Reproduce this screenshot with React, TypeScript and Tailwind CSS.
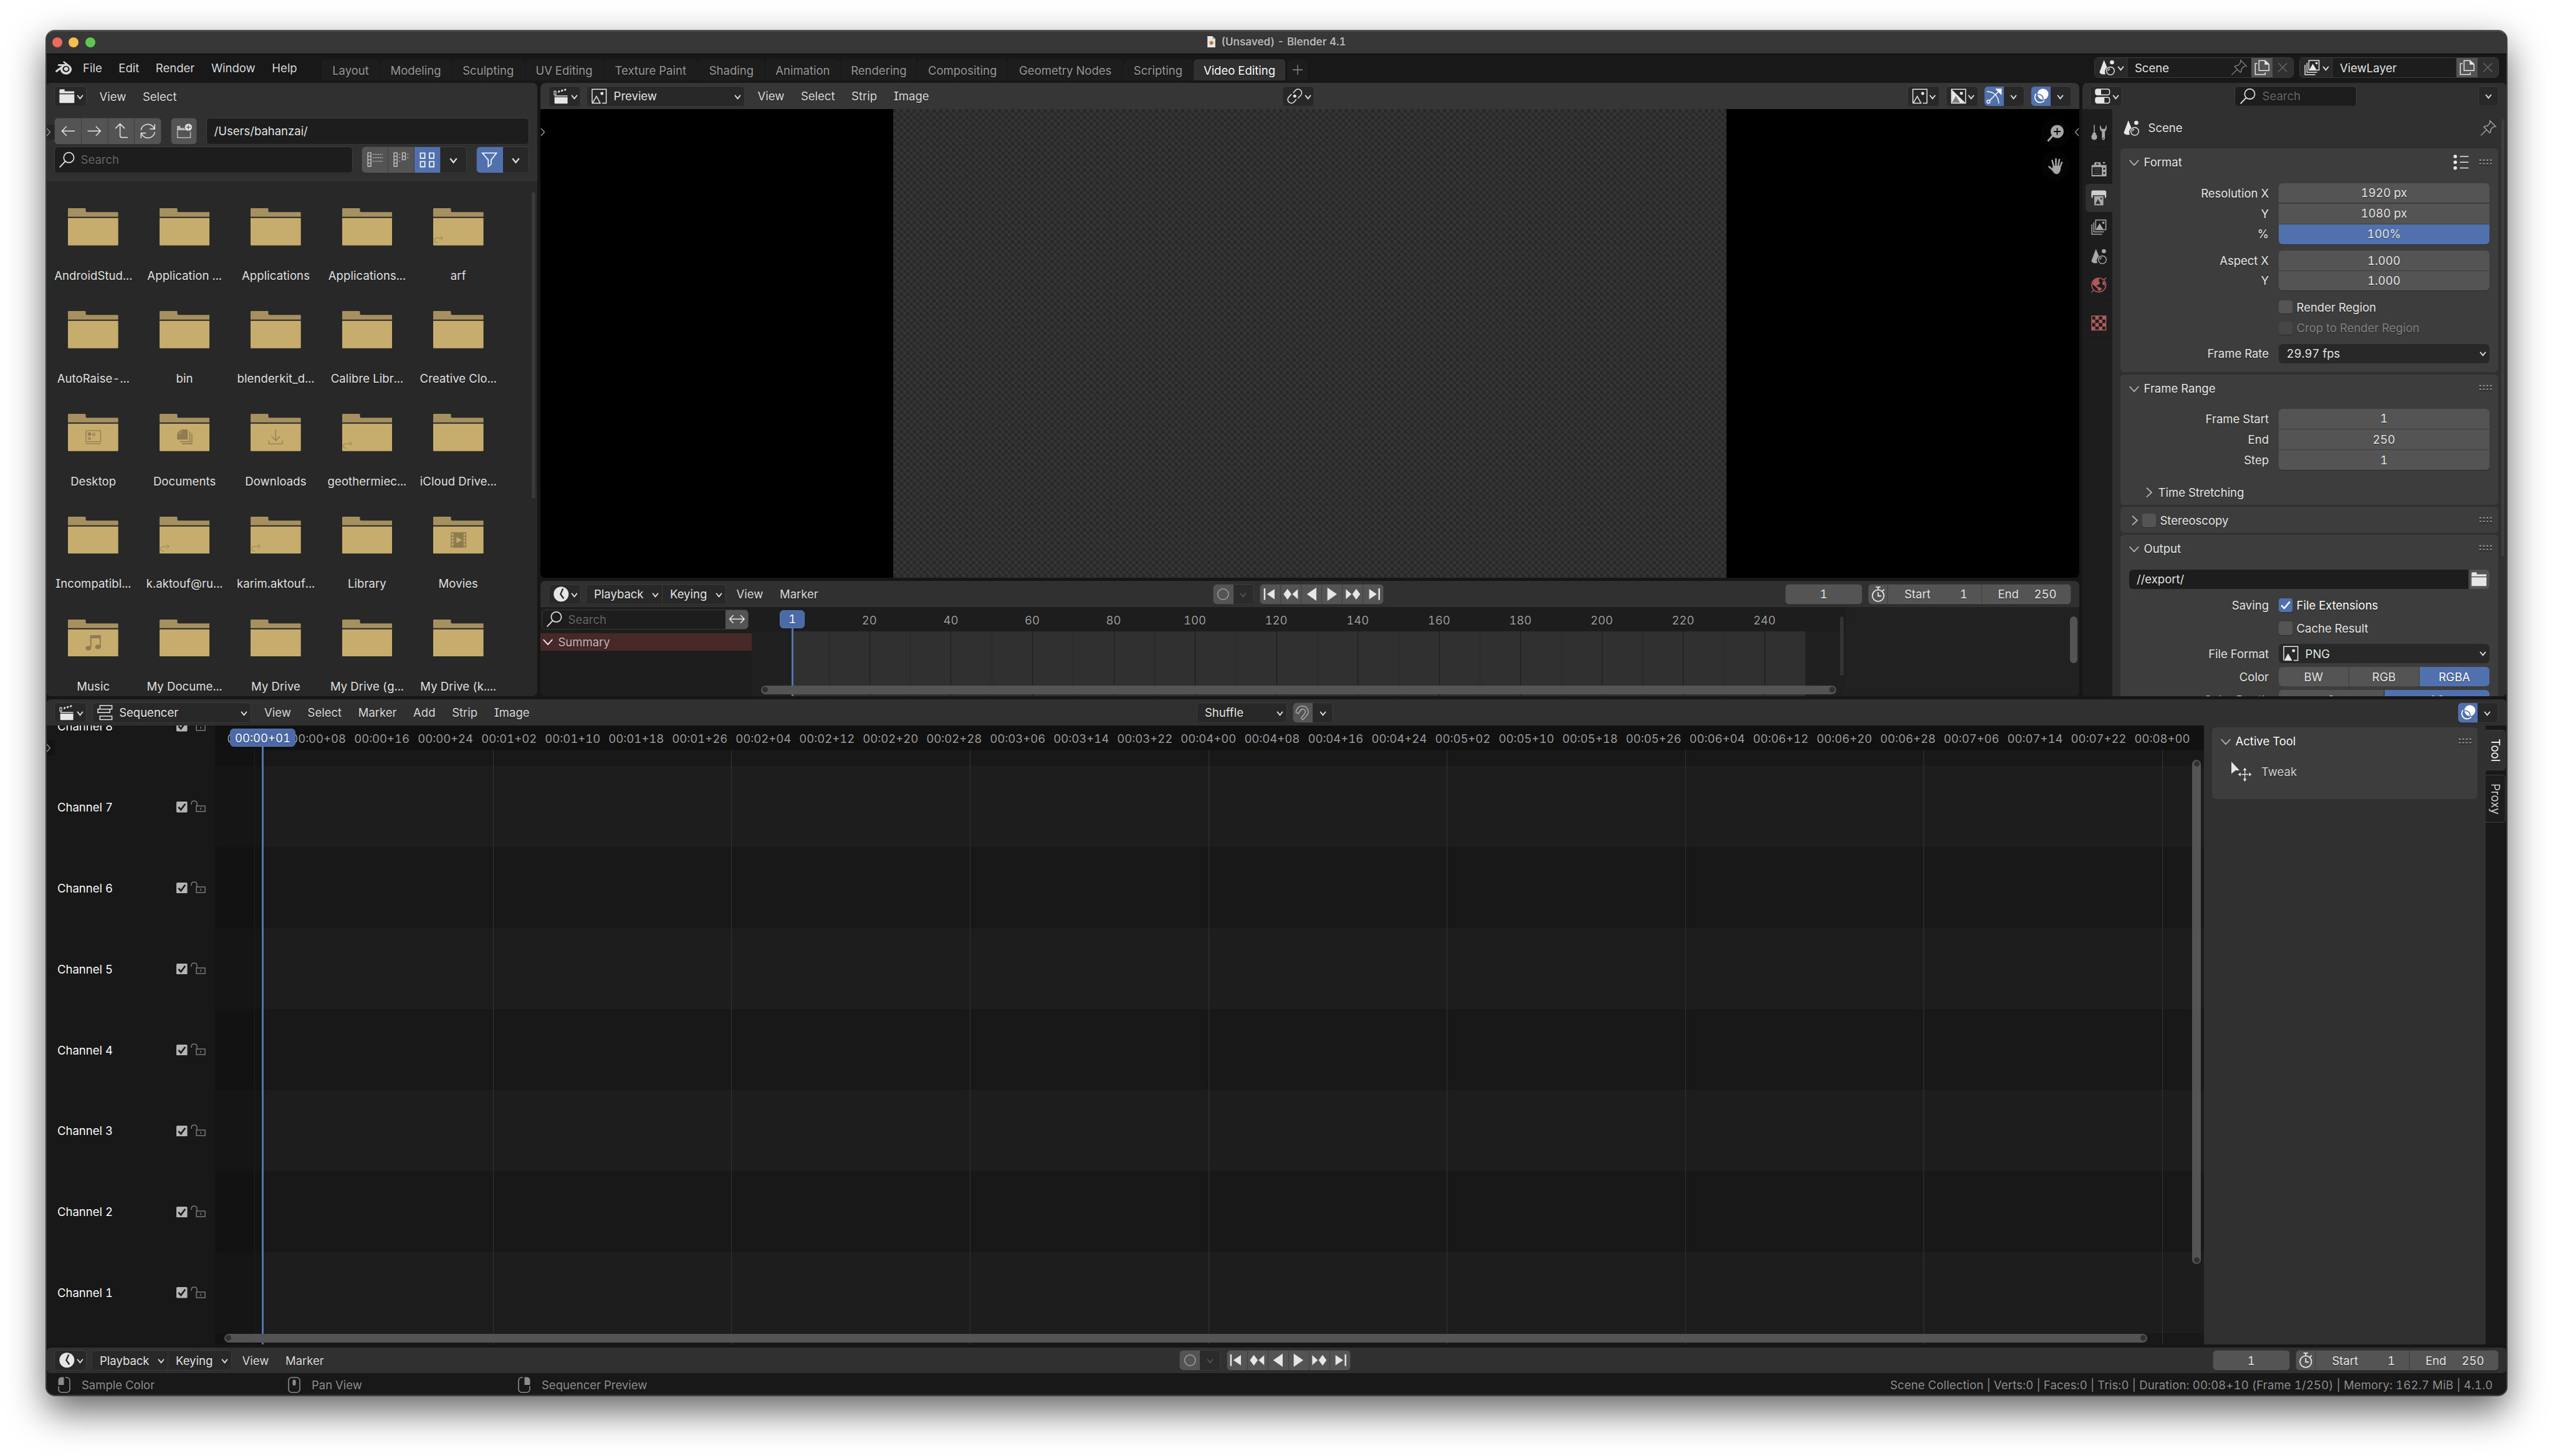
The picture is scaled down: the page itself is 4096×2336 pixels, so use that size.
import clsx from "clsx";
import { ReactNode } from "react";
import { SiBlender } from "react-icons/si";

type IconProps = { className?: string };

/* ---------- icons, drawn on a 16 unit grid ---------- */

const Icon = ({ className, children }: IconProps & { children: ReactNode }) => (
  <svg
    viewBox="0 0 16 16"
    className={clsx("size-[26.6px] shrink-0 overflow-visible", className)}
    fill="none"
    stroke="currentColor"
    strokeWidth="0.9"
  >
    {children}
  </svg>
);

const Chevron = ({ className }: IconProps) => (
  <svg viewBox="0 0 12 12" className={clsx("size-[11px] shrink-0", className)} fill="none" stroke="currentColor" strokeWidth="2">
    <path d="M1.2 3 L6 9 L10.8 3" />
  </svg>
);

const Triangle = ({ className }: IconProps) => (
  <svg viewBox="0 0 16 10" className={clsx("w-[16px] h-[10px] shrink-0", className)} fill="none" stroke="currentColor" strokeWidth="1.8">
    <path d="M0.7 1 L8 9 L15.3 1" />
  </svg>
);

const FolderIcon = ({ className }: IconProps) => (
  <Icon className={className}>
    <path fill="currentColor" stroke="none" d="M0.8 2.4 q0 -1 1 -1 h4 v1.9 h9.3 v2 h-14.3z" />
    <path fill="currentColor" stroke="none" d="M0.8 6.1 h14.4 v8 q0 .5 -.5 .5 h-13.4 q-.5 0 -.5 -.5z" />
  </Icon>
);

const ArrowLeft = () => (
  <Icon><path d="M6.5 3.5 L2 8 L6.5 12.5 M2 8 H14.5" /></Icon>
);
const ArrowRight = () => (
  <Icon><path d="M9.5 3.5 L14 8 L9.5 12.5 M14 8 H1.5" /></Icon>
);
const ArrowParent = () => (
  <Icon><path d="M2.5 5.5 L7 1 L11.5 5.5 M7 1 V12.5 Q7 14.2 8.7 14.2 H14.5" /></Icon>
);
const Refresh = () => (
  <Icon>
    <path d="M1.3 7 A6.7 6.7 0 0 1 14.2 5.8 M14.6 1.3 V6 H9.8" />
    <path d="M14.7 9 A6.7 6.7 0 0 1 1.8 10.2 M1.4 14.7 V10 H6.2" />
  </Icon>
);
const NewFolder = () => (
  <Icon>
    <g opacity="0.7">
      <path fill="currentColor" stroke="none" d="M1.2 3 h3.2 v2 h3.6 q.8 1.8 3 2.2 h-9.8z" />
      <path d="M1.6 7.3 V14.3 H14.2 V8.6" />
    </g>
    <circle cx="12.2" cy="4.3" r="3.4" fill="currentColor" stroke="none" />
    <path d="M12.2 2.2 V6.4 M10.1 4.3 H14.3" stroke="#545454" strokeWidth="0.8" />
  </Icon>
);
const Search = ({ className }: IconProps) => (
  <Icon className={className}>
    <circle cx="9.9" cy="5.9" r="4.9" strokeWidth="1" />
    <path d="M6.4 9.5 L1 15.2" strokeWidth="1.1" />
  </Icon>
);
const ListVertical = () => (
  <Icon className="opacity-80">
    <path d="M1.3 1.3 h3 v13 h-3z M1.3 4.6 h3 M1.3 8 h3 M1.3 11.2 h3" strokeWidth="0.8" />
    <path d="M6 2.8 h9.5 M6 6 h9.5 M6 9.4 h9.5" strokeDasharray="1 .8" strokeWidth="0.8" />
  </Icon>
);
const ListHorizontal = () => (
  <Icon className="opacity-80">
    <path d="M1.3 1.3 h3 v13 h-3z M1.3 4.6 h3 M1.3 8 h3 M1.3 11.2 h3 M9.3 1.3 h3 v6.7 h-3z M9.3 4.6 h3" strokeWidth="0.8" />
    <path d="M6 2.8 h1.6 M6 6 h1.6 M6 9.4 h1.6 M14 2.8 h1.6 M14 6 h1.6" strokeDasharray=".9 .5" strokeWidth="0.8" />
  </Icon>
);
const GridIcon = () => (
  <Icon>
    <path d="M1.5 1.5 h4.3 v5 h-4.3z M10.2 1.5 h4.3 v5 h-4.3z M1.5 9.8 h4.3 v5 h-4.3z M10.2 9.8 h4.3 v5 h-4.3z" strokeWidth="1" />
  </Icon>
);
const Filter = () => (
  <Icon><path d="M1.2 1.5 H14.8 L9.6 8.2 V12.2 L6.8 14.6 V8.2 Z" strokeWidth="1" /></Icon>
);
const Clapper = () => (
  <Icon>
    <path fill="currentColor" stroke="none" d="M1.6 7.3 h12.6 v1 h-12.6z M1.6 9 h12.6 v5.8 q0 .4 -.4 .4 h-11.8 q-.4 0 -.4 -.4z" />
    <path d="M1.2 3.2 h1.8 v3.3 h-1.8z" strokeWidth="0.7" />
    <path d="M5.2 4.4 l1.3 -1.6 M8.2 3.5 l1.3 -1.6 M11.2 2.6 l1.3 -1.6" strokeWidth="1.5" />
  </Icon>
);
const ImageIcon = ({ className }: IconProps) => (
  <Icon className={className}>
    <path d="M1.2 14.6 V1.3 H14.8 V14.7 H10.8" />
    <path fill="currentColor" stroke="none" d="M1.6 15.1 L5.4 8 L9.4 15.1z" />
    <circle cx="10.7" cy="5.4" r="1.5" fill="currentColor" stroke="none" />
  </Icon>
);
const ImageOutline = () => (
  <Icon>
    <path d="M1.2 14.6 V1.3 H14.8 V14.7 H10.8 M1.6 14.7 L5.4 8.2 L9 14.7 z" />
    <circle cx="10.7" cy="5.4" r="1.5" fill="currentColor" stroke="none" />
  </Icon>
);
const ImageAlpha = () => (
  <Icon>
    <path d="M1.2 1.3 H14.8 V14.7 H1.2z" />
    <path fill="currentColor" stroke="none" d="M1.2 1.3 L14.8 14.7 H9.5 L5.4 8 L1.6 14.7z" />
    <path fill="currentColor" stroke="none" opacity="0.45" d="M1.6 15.1 L5.4 8 L9.4 15.1z" />
    <circle cx="10.7" cy="5.2" r="1.5" fill="currentColor" stroke="none" />
  </Icon>
);
const LinkIcon = () => (
  <Icon>
    <path d="M6.5 5 L8.6 2.4 A3.5 3.5 0 0 1 13.8 7.2 L11 10" />
    <path d="M9.5 11 L7.4 13.6 A3.5 3.5 0 0 1 2.2 8.8 L5 6" />
    <circle cx="8" cy="8" r="1.5" fill="currentColor" stroke="none" />
  </Icon>
);
const GizmoIcon = () => (
  <Icon>
    <path d="M1 3.6 C8 3.6 12 8 12.6 15" />
    <circle cx="2.6" cy="13.3" r="1.5" />
    <path d="M3.8 12.2 L13.5 2.3" />
    <path fill="currentColor" stroke="none" d="M9 0.8 H15.2 V7z" />
  </Icon>
);
const OverlayIcon = () => (
  <Icon>
    <circle cx="10" cy="6" r="5.3" fill="currentColor" stroke="none" />
    <path d="M3.4 5.6 A5 5 0 1 0 11.4 12.2" strokeWidth="1.1" />
    <path d="M4.9 6.2 A4.8 4.8 0 0 1 10.4 10.9" stroke="#5070ae" strokeWidth="1" />
  </Icon>
);
const SceneIcon = ({ className }: IconProps) => (
  <Icon className={className}>
    <path fill="currentColor" stroke="none" d="M5.2 0.8 L8.2 8 A5 5 0 0 0 6.6 14.4 Q2.4 15.4 0.8 12.6 Z" />
    <circle cx="12.9" cy="3" r="2" fill="currentColor" stroke="none" />
    <circle cx="11.4" cy="11.3" r="3.8" />
    <path d="M9.2 11.2 A2.3 2.3 0 0 1 11 9.2" strokeWidth="0.8" />
  </Icon>
);
const Pin = ({ className }: IconProps) => (
  <Icon className={className}>
    <path d="M9.6 1 L15 6.6 C13.4 6.6 12.8 6.8 12 7.6 L10.4 9.3 C10.6 11 10.2 12 9.3 12.8 L3.6 7 C4.6 6.2 5.5 5.9 7 6 L8.8 4.2 C9.6 3.3 9.8 2.4 9.6 1z M6.2 9.9 L0.8 15.2" />
  </Icon>
);
const CopyIcon = () => (
  <Icon>
    <path d="M5 1.3 H10.8 L14.6 4.8 V11 H5z" />
    <path fill="currentColor" stroke="none" d="M10.4 1 L15 5.3 H10.4z" />
    <path d="M3.4 4.2 H1.4 V14.8 H11 V12.8" />
  </Icon>
);
const Cross = () => (
  <Icon><path d="M3.8 3.8 L12.2 12.2 M12.2 3.8 L3.8 12.2" /></Icon>
);
const LayersIcon = ({ className }: IconProps) => (
  <Icon className={className}>
    <path d="M5 1.2 H14.8 V10.6 H5z" />
    <path fill="currentColor" stroke="none" d="M5.4 10.4 L8.8 4.4 L12.4 10.4z" />
    <circle cx="12.4" cy="3.8" r="1.1" fill="currentColor" stroke="none" />
    <path d="M3.2 3.4 V12.7 H13 M1.3 5.4 V14.9 H11.2" />
  </Icon>
);
const PropertiesIcon = () => (
  <Icon>
    <path d="M3 1.2 h10 a1.8 1.8 0 0 1 1.8 1.8 v2 a1.8 1.8 0 0 1 -1.8 1.8 h-10 a1.8 1.8 0 0 1 -1.8 -1.8 v-2 a1.8 1.8 0 0 1 1.8 -1.8z M3 9.2 h10 a1.8 1.8 0 0 1 1.8 1.8 v2 a1.8 1.8 0 0 1 -1.8 1.8 h-10 a1.8 1.8 0 0 1 -1.8 -1.8 v-2 a1.8 1.8 0 0 1 1.8 -1.8z" />
    <path
      fill="currentColor"
      stroke="none"
      d="M3 1.2 h3.6 v5.6 h-3.6 a1.8 1.8 0 0 1 -1.8 -1.8 v-2 a1.8 1.8 0 0 1 1.8 -1.8z M3 9.2 h6.8 v5.6 h-6.8 a1.8 1.8 0 0 1 -1.8 -1.8 v-2 a1.8 1.8 0 0 1 1.8 -1.8z"
    />
  </Icon>
);
const ToolsIcon = () => (
  <Icon>
    <path d="M3.6 0.8 V9" />
    <path fill="currentColor" stroke="none" d="M2 8.4 h3.2 v1.6 q1.2 1 1.2 2.4 q0 2.9 -2.8 2.9 q-2.8 0 -2.8 -2.9 q0 -1.4 1.2 -2.4z" />
    <path fill="currentColor" stroke="none" d="M9 1 V4 q0 2 2 3.2 V13.6 q0 1.7 1.4 1.7 q1.5 0 1.5 -1.7 V7.2 q1.6 -1.2 1.6 -3.2 V1 q-1 .8 -1.4 3.6 h-3.4 q-.6 -2.8 -1.7 -3.6z" />
    <circle cx="12.4" cy="13.7" r="0.6" fill="#1d1d1d" stroke="none" />
  </Icon>
);
const RenderIcon = () => (
  <Icon>
    <path fill="currentColor" stroke="none" d="M1 4 h2.4 l.6 -2.6 h5.4 l.6 2.6 h5.4 v11 h-14.4z M12 1.2 h2 v1.4 h-2z" />
    <path stroke="#1d1d1d" d="M2.4 6.6 h8 v6.6 h-8z" fill="#1d1d1d" />
    <path d="M3.2 8 h6.4 M3.2 10 h6.4 M3.2 12 h6.4" opacity="0.35" />
    <circle cx="13.2" cy="7.6" r="1" fill="#1d1d1d" stroke="none" />
    <circle cx="13.2" cy="11.8" r="1" fill="#1d1d1d" stroke="none" />
    <path fill="#1d1d1d" stroke="none" d="M5.4 2.6 h2.6 v1.2 h-2.6z" />
  </Icon>
);
const OutputIcon = () => (
  <Icon>
    <path fill="currentColor" stroke="none" d="M2.6 0.9 h10.8 q1.8 0 1.8 2 v4 q0 1.4 -1.4 1.4 v-2.8 h-11.6 v2.8 q-1.4 0 -1.4 -1.4 v-4 q0 -2 1.8 -2z" />
    <path fill="currentColor" stroke="none" opacity="0.75" d="M3.6 6.4 h8.8 v8.9 h-8.8z" />
    <path fill="#303030" stroke="none" d="M4.8 14 L7.2 9.4 L9.8 14z" />
    <circle cx="10.4" cy="8.9" r="0.9" fill="#303030" stroke="none" />
  </Icon>
);
const WorldIcon = () => (
  <Icon>
    <circle cx="8" cy="8" r="6.8" />
    <path fill="currentColor" stroke="none" d="M2.2 5.4 C4 1.6 7 1.4 8.4 2 L8 4.6 L9.4 6 L7.6 7.8 L5.6 8.6 L7.8 10 L11 11 L9.6 13.4 L7.4 13.6 L6.8 11.4 L4.4 9.2 L2 7.4z M11.6 4.2 l2 1 l.4 3.6 l-2.4 -1.4z" />
    <path d="M12.6 3.2 L15.2 1 M3.4 12.8 L0.8 15.2" />
  </Icon>
);
const TextureIcon = () => (
  <Icon>
    <path d="M1.2 1.2 H14.8 V14.8 H1.2z" />
    <path fill="currentColor" stroke="none" d="M4.6 1.2 h3.4 v3.4 h-3.4z M11.4 1.2 h3.4 v3.4 h-3.4z M1.2 4.6 h3.4 v3.4 h-3.4z M8 4.6 h3.4 v3.4 h-3.4z M4.6 8 h3.4 v3.4 h-3.4z M11.4 8 h3.4 v3.4 h-3.4z M1.2 11.4 h3.4 v3.4 h-3.4z M8 11.4 h3.4 v3.4 h-3.4z" />
  </Icon>
);
const PresetIcon = () => (
  <Icon>
    <circle cx="2.5" cy="2.4" r="1.7" fill="currentColor" stroke="none" />
    <circle cx="2.5" cy="8" r="1.7" fill="currentColor" stroke="none" />
    <circle cx="2.5" cy="13.6" r="1.7" fill="currentColor" stroke="none" />
    <path d="M7 2.4 h8.3 M7 8 h8.3 M7 13.6 h8.3" />
  </Icon>
);
const ClockIcon = () => (
  <Icon>
    <circle cx="8" cy="8" r="7.2" fill="currentColor" stroke="none" />
    <path d="M9.8 2.6 L7.4 8 L10.4 12.2" stroke="#282828" strokeWidth="1.4" />
  </Icon>
);
const Stopwatch = () => (
  <Icon>
    <circle cx="8" cy="9.4" r="5.6" strokeWidth="1.1" />
    <path d="M8 3.8 V1.4 M5.8 1.1 H10.2 M12 5.2 L13.8 3.4 M8 6 V9.8 H11" strokeWidth="1.1" />
  </Icon>
);
const RecordIcon = () => (
  <Icon className="opacity-50"><circle cx="8" cy="8" r="5.2" /></Icon>
);
const Magnet = () => (
  <Icon className="opacity-60">
    <path d="M1.2 7.6 C2.4 2.8 6 0.8 9.4 2 C13.4 3.4 14.4 8 11.4 11.2 L8 15 L6.4 13.2 L9.6 9.2 C11.2 7 10.4 4.8 8.4 4.6 C6.2 4.4 5.2 6 3.8 9z" />
  </Icon>
);
const SequencerIcon = () => (
  <Icon>
    <path d="M3.2 1.2 H14.8 V4.6 H3.2z M1.2 4.6 H12.8 V8 H1.2z M3.2 11.4 H14.8 V14.8 H3.2z" />
  </Icon>
);
const SwapArrows = () => (
  <Icon><path d="M4.6 4.2 L0.9 8 L4.6 11.8 M11.4 4.2 L15.1 8 L11.4 11.8 M1 8 H15" /></Icon>
);
const ZoomIcon = () => (
  <svg viewBox="0 0 30 28" className="w-[30px] h-[28px]">
    <circle cx="17.5" cy="11" r="10.5" fill="#a6a6a6" />
    <path d="M10.5 17.5 L2.5 26.5" stroke="#a6a6a6" strokeWidth="3" />
    <path d="M17.5 5.5 V16.5 M12 11 H23" stroke="#000" strokeWidth="1.8" />
  </svg>
);
const HandIcon = () => (
  <svg viewBox="0 0 30 28" className="w-[30px] h-[28px]" fill="none" stroke="#a6a6a6" strokeWidth="2.6" strokeLinecap="round">
    <path d="M12 14 L9.5 4.5 M15.5 13 L15.5 2 M19 13 L21 3 M22 15 L25 7.5 M11 20 L4.5 14.5" />
    <path d="M11 13 L23.2 13 Q24 25 17 26.4 Q12.5 26.4 9 19.4z" fill="#a6a6a6" stroke="none" />
  </svg>
);
const TweakIcon = () => (
  <svg viewBox="0 0 34 32" className="w-[34px] h-[32px]" fill="#e5e5e5">
    <path d="M1 0 L14 14 H7.6 L1 19.6z" />
    <path d="M22.6 13 V31 M17 20.5 H28" stroke="#e5e5e5" strokeWidth="1.3" />
    <path d="M22.6 9.5 l2.9 4.6 h-5.8z M22.6 32 l2.9 -4.6 h-5.8z M11.6 20.5 l4.4 -3 v6z M33.6 20.5 l-4.4 -3 v6z" />
  </svg>
);

const transport = [
  <path key="s" d="M1.6 2.4 h1.5 v11.2 h-1.5z M12 3 V13 L4.6 8z" />,
  <path key="pk" d="M4.6 2.8 L8.4 8 L4.6 13.2 L0.8 8z M14.6 3.2 V12.8 L9.2 8z" />,
  <path key="r" d="M12.6 1.6 V14.4 L3.4 8z" />,
  <path key="p" d="M3.4 1.6 V14.4 L12.6 8z" />,
  <path key="nk" d="M11.4 2.8 L15.2 8 L11.4 13.2 L7.6 8z M1.4 3.2 V12.8 L6.8 8z" />,
  <path key="e" d="M14.4 2.4 h-1.5 v11.2 h1.5z M4 3 V13 L11.4 8z" />,
];

/* ---------- shared widgets ---------- */

const widget = "flex items-center shrink-0 h-[33px] rounded-[6px] border border-[#3d3d3d] overflow-hidden shadow-[0_1px_0_rgba(0,0,0,0.2)]";

const EditorButton = ({ children, className }: IconProps & { children: ReactNode }) => (
  <div className={clsx(widget, "w-[52px] bg-[#282828] pl-[6px] gap-[2px]", className)}>
    {children}
    <Chevron className="mt-[2px]" />
  </div>
);

const Menu = ({ items }: { items: string[] }) => (
  <div className="flex gap-[26.600px] text-[#dadada]">
    {items.map((item) => (
      <span key={item}>{item}</span>
    ))}
  </div>
);

const ToggleDrop = ({ icon, on }: { icon: ReactNode; on?: boolean }) => (
  <div className={clsx(widget, "w-[65px] bg-[#282828]")}>
    <div className={clsx("flex items-center justify-center w-[31px] h-full", on ? "bg-[#5070ae] text-white" : "bg-[#545454]")}>
      {icon}
    </div>
    <div className="flex flex-1 items-center justify-center">
      <Chevron className="mt-[2px]" />
    </div>
  </div>
);

const PlaybackMenus = () => (
  <>
    <EditorButton><ClockIcon /></EditorButton>
    <div className={clsx(widget, "ml-[8px] w-[225px] bg-[#282828]")}>
      <div className="flex items-center w-[122px] h-full pl-[12px] pr-[5px] border-r border-[#3d3d3d]">
        Playback
        <Chevron className="ml-auto mt-[2px]" />
      </div>
      <div className="flex flex-1 items-center pl-[12px] pr-[5px]">
        Keying
        <Chevron className="ml-auto mt-[2px]" />
      </div>
    </div>
    <div className="ml-[16.500px]"><Menu items={["View", "Marker"]} /></div>
  </>
);

const Transport = () => (
  <>
    <div className={clsx(widget, "w-[66px] bg-[#2b2b2b]")}>
      <div className="flex items-center justify-center w-[32px] h-full bg-[#545454]"><RecordIcon /></div>
      <div className="flex flex-1 items-center justify-center text-[#555]"><Chevron className="mt-[2px]" /></div>
    </div>
    <div className={clsx(widget, "ml-[9.500px] w-[199px] bg-[#545454] divide-x divide-[#3d3d3d]")}>
      {transport.map((shape, index) => (
        <div key={index} className="flex flex-1 h-full items-center justify-center">
          <svg viewBox="0 0 16 16" className="size-[26.600px]" fill="#e6e6e6">{shape}</svg>
        </div>
      ))}
    </div>
  </>
);

const FrameFields = () => (
  <div className="flex ml-auto gap-[9.500px] pr-[13.500px]">
    <div className={clsx(widget, "w-[123.500px] bg-[#545454] justify-center")}>1</div>
    <div className={clsx(widget, "w-[325.500px] bg-[#545454] divide-x divide-[#3d3d3d]")}>
      <div className="flex items-center justify-center w-[31px] h-full"><Stopwatch /></div>
      <div className="flex items-center justify-between w-[151px] h-full pl-[26.500px] pr-[22.500px]">
        <span>Start</span><span>1</span>
      </div>
      <div className="flex flex-1 items-center justify-between h-full pl-[25.500px] pr-[22px]">
        <span>End</span><span>250</span>
      </div>
    </div>
  </div>
);

const RegionToggle = ({ className, flip }: IconProps & { flip?: boolean }) => (
  <div className={clsx("absolute flex items-center w-[14px] h-[24px] bg-black/20", flip ? "justify-end" : "justify-start", className)}>
    <svg viewBox="0 0 8 14" className="w-[8px] h-[14px]" fill="none" stroke="#8c8c8c" strokeWidth="1.600">
      {flip ? <path d="M7 1 L1.6 7 L7 13" /> : <path d="M1 1 L6.4 7 L1 13" />}
    </svg>
  </div>
);

const ScrollKnob = () => <div className="size-[11px] rounded-full bg-[#303030] border border-[#5a5a5a]" />;

/* ---------- title bar and top bar ---------- */

const TitleBar = () => (
  <div className="relative flex items-center justify-center h-[38px] bg-[#373737] border-b border-black pb-[1px]">
    <div className="absolute left-[10px] top-[10.500px] flex gap-[10.400px]">
      <div className="size-[16px] rounded-full bg-[#ec6a5e]" />
      <div className="size-[16px] rounded-full bg-[#f4bf4f]" />
      <div className="size-[16px] rounded-full bg-[#61c554]" />
    </div>
    <svg viewBox="0 0 16 20" className="w-[15px] h-[18px] mr-[8px]">
      <path d="M1 0 H10 L15 5 V20 H1z" fill="#e8e8e8" />
      <path d="M10 0 V5 H15z" fill="#aaa" />
      <circle cx="8" cy="12" r="3.6" fill="#e08a2e" />
      <circle cx="8.6" cy="12" r="1.3" fill="#2b5fa5" />
    </svg>
    <span className="text-[17px] font-semibold text-[#b8b8b8]">(Unsaved) - Blender 4.1</span>
  </div>
);

const workspaces = [
  { name: "Layout", width: "w-[94px]" },
  { name: "Modeling", width: "w-[115px]" },
  { name: "Sculpting", width: "w-[117.500px]" },
  { name: "UV Editing", width: "w-[126px]" },
  { name: "Texture Paint", width: "w-[151.500px]" },
  { name: "Shading", width: "w-[107.700px]" },
  { name: "Animation", width: "w-[121.400px]" },
  { name: "Rendering", width: "w-[122.700px]" },
  { name: "Compositing", width: "w-[145.700px]" },
  { name: "Geometry Nodes", width: "w-[184.500px]" },
  { name: "Scripting", width: "w-[113px]" },
  { name: "Video Editing", width: "w-[148px]" },
];

const DataBlock = ({ icon, name, pinned }: { icon: ReactNode; name: string; pinned?: boolean }) => (
  <div className={clsx(widget, "w-[320px] bg-[#1d1d1d]")}>
    <div className="flex items-center gap-[3px] w-[52px] h-full pl-[6px] bg-[#282828] border-r border-[#3d3d3d]">
      {icon}
      <Chevron className="mt-[2px]" />
    </div>
    <div className="flex flex-1 items-center justify-between pl-[12px] pr-[6px]">
      {name}
      {pinned && <Pin className="text-[#777]" />}
    </div>
    <div className="flex items-center justify-center w-[34px] h-full bg-[#545454]"><CopyIcon /></div>
    <div className="flex items-center justify-center w-[33px] h-full bg-[#303030] text-[#666]"><Cross /></div>
  </div>
);

const TopBar = () => (
  <div className="flex h-[46px] bg-[#181818]">
    <SiBlender className="size-[26px] ml-[14.500px] mt-[9px] mr-[18.500px] text-[#d9d9d9]" />
    <div className="mt-[10px]"><Menu items={["File", "Edit", "Render", "Window", "Help"]} /></div>
    <div className="absolute left-[442px] flex mt-[7.500px] h-[34.500px] text-[#989898]">
      {workspaces.map(({ name, width }) => (
        <div
          key={name}
          className={clsx(
            "flex items-center justify-center rounded-t-[6px] pt-[2px] border-r border-[#181818]",
            width,
            name === "Video Editing" ? "bg-[#303030] text-white" : "bg-[#1d1d1d]",
          )}
        >
          {name}
        </div>
      ))}
      <div className="flex items-center justify-center w-[32px] ml-[3px] rounded-t-[6px] bg-[#1d1d1d]">
        <svg viewBox="0 0 16 16" className="size-[16px]" stroke="#8c8c8c" strokeWidth="1.300"><path d="M8 0 V16 M0 8 H16" /></svg>
      </div>
    </div>
    <div className="flex gap-[9px] ml-auto mt-[5px] pr-[13px]">
      <DataBlock icon={<SceneIcon />} name="Scene" pinned />
      <DataBlock icon={<LayersIcon />} name="ViewLayer" />
    </div>
  </div>
);

/* ---------- file browser ---------- */

type FolderKind = "link" | "desktop" | "documents" | "downloads" | "movies" | "music";

const folders: { name: string; kind?: FolderKind }[] = [
  { name: "AndroidStud..." },
  { name: "Application ..." },
  { name: "Applications" },
  { name: "Applications..." },
  { name: "arf", kind: "link" },
  { name: "AutoRaise-..." },
  { name: "bin" },
  { name: "blenderkit_d..." },
  { name: "Calibre Libr..." },
  { name: "Creative Clo..." },
  { name: "Desktop", kind: "desktop" },
  { name: "Documents", kind: "documents" },
  { name: "Downloads", kind: "downloads" },
  { name: "geothermiec...", kind: "link" },
  { name: "iCloud Drive..." },
  { name: "Incompatibl..." },
  { name: "k.aktouf@ru...", kind: "link" },
  { name: "karim.aktouf...", kind: "link" },
  { name: "Library" },
  { name: "Movies", kind: "movies" },
  { name: "Music", kind: "music" },
  { name: "My Docume..." },
  { name: "My Drive" },
  { name: "My Drive (g..." },
  { name: "My Drive (k...." },
];

const badges: Record<FolderKind, ReactNode> = {
  link: <path d="M11 84 h-3 a5.5 5.5 0 0 1 0 -11 h14 M18 67.5 l5.5 5.5 l-5.5 5.5" strokeWidth="1.4" />,
  desktop: (
    <g strokeWidth="2">
      <path d="M44 41 h36 v27 h-36z M43 73 h38" />
      <path d="M49 46 h7 v7 h-7z M50 58 h5 v5 h-5z" fill="#8f7c50" strokeWidth="1" />
      <path d="M59 46 h8 v8 h-8z" fill="#a6905f" stroke="none" />
      <path d="M51.5 59.5 h2 v2 h-2z" fill="#c7ad6d" stroke="none" />
    </g>
  ),
  documents: (
    <g>
      <path d="M43 47 L52 38 H69 V63 H43z" fill="#8f7c50" stroke="none" />
      <path d="M43 47.5 H52.5 V38" stroke="#c7ad6d" strokeWidth="1.4" />
      <path d="M74 43 V68 H50 M79 48 V73 H55" strokeWidth="2.4" />
    </g>
  ),
  downloads: <path d="M61.5 38 V65 M51 55 L61.5 65.5 L72 55 M45 65 V73.5 H78 V65" strokeWidth="2" />,
  movies: (
    <g>
      <path d="M43 38 H81 V76 H43z" fill="#8f7c50" stroke="none" />
      <path d="M47.5 41 v34 M76.5 41 v34" stroke="#c7ad6d" strokeWidth="4.5" strokeDasharray="5 3" />
      <path d="M57 50 L70 57 L57 64z" fill="#c7ad6d" stroke="none" />
    </g>
  ),
  music: (
    <g>
      <path d="M56 68 V40 H79 V66" strokeWidth="3" />
      <path d="M54.5 38.5 H80.5 V46 H54.5z" fill="#8f7c50" stroke="none" />
      <ellipse cx="50" cy="70" rx="7" ry="5.5" fill="#8f7c50" stroke="none" />
      <ellipse cx="73.5" cy="67" rx="7" ry="5.5" fill="#8f7c50" stroke="none" />
    </g>
  ),
};

const Folder = ({ name, kind }: { name: string; kind?: FolderKind }) => (
  <div className="flex flex-col items-center h-[164.800px]">
    <svg viewBox="0 0 123 91" className="w-[80.700px] h-[59.700px]" fill="none" stroke="#8f7c50">
      <path d="M0 2 q0 -2 2 -2 h39.5 q2 0 2 2 v5 q0 2.5 2.5 2.5 h75 q2 0 2 2 v9.5 h-123z" fill="#a6905f" stroke="none" />
      <path d="M0 24 h123 v65 q0 2 -2 2 h-119 q-2 0 -2 -2z" fill="#c7ad6d" stroke="none" />
      {kind && badges[kind]}
    </svg>
    <span className="mt-[34px] leading-[28px] whitespace-nowrap tracking-[0.100px] text-[#e2e2e2]">{name}</span>
  </div>
);

const FileBrowser = () => (
  <div className="relative flex flex-col w-[788px] rounded-[8px] overflow-hidden bg-[#282828]">
    <div className="h-[158.400px] shrink-0 bg-[#303030]">
      <div className="flex items-center h-[43px] pl-[13px]">
        <EditorButton><FolderIcon /></EditorButton>
        <div className="ml-[20.500px]"><Menu items={["View", "Select"]} /></div>
      </div>
      <div className="flex mt-[13px] pl-[13px]">
        <div className={clsx(widget, "!h-[42.600px] w-[172px] bg-[#545454] divide-x divide-[#3d3d3d]")}>
          {[<ArrowLeft />, <ArrowRight />, <ArrowParent />, <Refresh />].map((icon, index) => (
            <div key={index} className="flex flex-1 h-full items-center justify-center">{icon}</div>
          ))}
        </div>
        <div className={clsx(widget, "!h-[42.600px] ml-[15px] w-[42px] justify-center bg-[#545454]")}><NewFolder /></div>
        <div className={clsx(widget, "!h-[42.600px] ml-[14.500px] w-[518px] pl-[12px] bg-[#1d1d1d]")}>/Users/bahanzai/</div>
      </div>
      <div className="flex mt-[3.500px] pl-[13px]">
        <div className={clsx(widget, "!h-[42.600px] w-[478.500px] pl-[6px] gap-[9px] bg-[#1d1d1d]")}>
          <Search />
          <span className="text-[#686868]">Search</span>
        </div>
        <div className={clsx(widget, "!h-[42.600px] ml-[14px] w-[169px] bg-[#282828] divide-x divide-[#3d3d3d]")}>
          <div className="flex w-[42px] h-full items-center justify-center bg-[#545454]"><ListVertical /></div>
          <div className="flex w-[42px] h-full items-center justify-center bg-[#545454]"><ListHorizontal /></div>
          <div className="flex w-[42px] h-full items-center justify-center bg-[#5070ae] text-white"><GridIcon /></div>
          <div className="flex flex-1 items-center justify-center"><Chevron className="mt-[2px] size-[13px]" /></div>
        </div>
        <div className={clsx(widget, "!h-[42.600px] ml-[15px] w-[85px] bg-[#282828]")}>
          <div className="flex w-[42px] h-full items-center justify-center bg-[#5070ae] text-white"><Filter /></div>
          <div className="flex flex-1 items-center justify-center"><Chevron className="mt-[2px] size-[13px]" /></div>
        </div>
      </div>
    </div>
    <div className="grid grid-cols-[repeat(5,146.400px)] pt-[43px] pl-[2.500px]">
      {folders.map((folder) => (
        <Folder key={folder.name} {...folder} />
      ))}
    </div>
    <div className="absolute left-[779px] top-[174.500px] w-[6px] h-[492px] rounded-full bg-[#3a3a3a]" />
    <RegionToggle className="left-0 top-[67px]" />
  </div>
);

/* ---------- preview ---------- */

const Preview = () => (
  <div className="relative flex flex-col h-[794px] rounded-[8px] overflow-hidden bg-black">
    <div className="flex items-center h-[42px] shrink-0 pl-[13px] bg-[#363636]">
      <EditorButton><Clapper /></EditorButton>
      <div className={clsx(widget, "ml-[9px] w-[254px] bg-[#282828] pl-[6px] pr-[5px] gap-[10px]")}>
        <ImageOutline />
        Preview
        <Chevron className="ml-auto mt-[2px]" />
      </div>
      <div className="ml-[20.500px]"><Menu items={["View", "Select", "Strip", "Image"]} /></div>
      <div className="absolute left-[1190px]"><EditorButton><LinkIcon /></EditorButton></div>
      <div className="flex ml-auto gap-[10px] pr-[13.500px]">
        <EditorButton><ImageOutline /></EditorButton>
        <EditorButton className="mr-[-1px]"><ImageAlpha /></EditorButton>
        <ToggleDrop on icon={<GizmoIcon />} />
        <ToggleDrop on icon={<OverlayIcon />} />
      </div>
    </div>
    <div className="flex-1 ml-[565.600px] w-[1337.400px] bg-[repeating-conic-gradient(#353535_0%_25%,#282828_0%_50%)] bg-[length:10.500px_10.500px]" />
    <div className="absolute right-[15px] top-[57px] flex items-center justify-center size-[47px] rounded-full bg-[#040404]"><ZoomIcon /></div>
    <div className="absolute right-[15px] top-[110px] flex items-center justify-center size-[47px] rounded-full bg-[#040404]"><HandIcon /></div>
    <RegionToggle className="left-0 top-[67px]" />
    <RegionToggle flip className="right-0 top-[67px]" />
  </div>
);

/* ---------- timeline ---------- */

const FRAME = 6.528; // width of one timeline frame
const ORIGIN = 58.3; // frame zero

const Timeline = () => (
  <div className="flex flex-col h-[185px] rounded-[8px] overflow-hidden bg-[#1d1d1d]">
    <div className="relative flex items-center h-[42px] shrink-0 pl-[13px] bg-[#303030]">
      <PlaybackMenus />
      <div className="absolute left-[1078.500px] flex"><Transport /></div>
      <FrameFields />
    </div>
    <div className="flex flex-1">
      <div className="w-[339px] shrink-0 pt-[4px]">
        <div className={clsx(widget, "!h-[31.500px] ml-[2px] w-[332px] pl-[6px] gap-[9px]")}>
          <Search />
          <span className="text-[#686868]">Search</span>
          <div className="flex items-center justify-center ml-auto w-[36px] h-full bg-[#545454]"><SwapArrows /></div>
        </div>
        <div className="flex items-center h-[28px] mt-[6px] pl-[4px] gap-[8.500px] bg-[#482828] text-[#c4baba]">
          <Triangle className="text-white" />
          Summary
        </div>
      </div>
      <div className="relative w-[1756px] shrink-0 overflow-hidden">
        <div className="flex items-center h-[39px] pt-[2px] pl-[123.600px] text-[#9c9c9c]">
          {Array.from({ length: 12 }, (_, index) => (
            <div key={index} className="w-[130.560px] shrink-0 text-center">{(index + 1) * 20}</div>
          ))}
        </div>
        <div className="h-[104px] bg-[#202020]">
          <div className="h-full ml-[64.800px] w-[1626px] bg-[#303030]" />
        </div>
        {Array.from({ length: 26 }, (_, index) => (
          <div
            key={index}
            className={clsx("absolute top-[39px] bottom-0 w-px", index % 2 ? "bg-[#282828]" : "bg-[#1a1a1a]")}
            style={{ left: ORIGIN + index * 10 * FRAME }}
          />
        ))}
        <div className="absolute left-[64px] top-[20px] bottom-0 w-[2.600px] bg-[#5474b1]" />
        <div className="absolute left-[45.300px] top-[4.500px] flex items-center justify-center w-[40px] h-[29px] rounded-[6px] border border-[#5577b8] bg-[#4b6aa8] text-white">1</div>
        <div className="absolute left-[14.700px] bottom-[3.500px] flex items-center justify-between w-[1725.700px] h-[13.800px] px-px rounded-full bg-[#545454]">
          <ScrollKnob />
          <ScrollKnob />
        </div>
        <div className="absolute left-[1746px] top-[15px] w-[6px] h-[95px] rounded-full bg-[#333]" />
      </div>
      <div className="relative flex-1 bg-[#212121]">
        <div className="absolute right-[3.500px] top-[15px] w-[12px] h-[74.500px] rounded-full bg-[#545454]" />
      </div>
    </div>
  </div>
);

/* ---------- properties ---------- */

const tabItem = "flex items-center justify-center h-[46.700px]";

const PropertyTabs = () => (
  <div className="w-[48px] shrink-0 pt-[13.500px] bg-[#1d1d1d] text-[#a8a8a8]">
    <div className={clsx(tabItem, "ml-[5px]")}><ToolsIcon /></div>
    <div className="h-[12.500px] ml-[5px] border-t border-[#181818]" />
    <div className={clsx(tabItem, "ml-[5px]")}><RenderIcon /></div>
    <div className={clsx(tabItem, "ml-[5px]")}>
      <div className="flex items-center justify-center w-full h-[44.500px] rounded-l-[6px] bg-[#303030] text-[#cfcfcf]"><OutputIcon /></div>
    </div>
    <div className={clsx(tabItem, "ml-[5px]")}><LayersIcon /></div>
    <div className={clsx(tabItem, "ml-[5px]")}><SceneIcon /></div>
    <div className={clsx(tabItem, "ml-[5px] text-[#b05a5c]")}><WorldIcon /></div>
    <div className="h-[13.500px] ml-[5px] border-t border-[#181818]" />
    <div className={clsx(tabItem, "ml-[5px] text-[#b05a5c]")}><TextureIcon /></div>
    <div className="ml-[5px] border-t border-[#181818]" />
  </div>
);

const DragDots = () => (
  <svg viewBox="0 0 30 16" className="w-[20px] h-[11px]">
    {[0, 8.5, 17, 25.5].map((x) => (
      <g key={x}>
        <path d={`M${x} 1 h4 v3.5 h-4z M${x} 9.5 h4 v3.5 h-4z`} fill="#9a9a9a" />
        <path d={`M${x} 4.5 h4 v2 h-4z M${x} 13 h4 v2 h-4z`} fill="#141414" />
      </g>
    ))}
  </svg>
);

const PanelHeader = ({ title, preset }: { title: string; preset?: boolean }) => (
  <div className="flex items-center h-[44px] pl-[13.500px] pr-[10px]">
    <Triangle className="text-[#b8b8b8] mt-[2px]" />
    <span className="ml-[8px] mr-auto">{title}</span>
    {preset && <span className="mr-[16px]"><PresetIcon /></span>}
    <DragDots />
  </div>
);

const Checkbox = ({ checked, dim }: { checked?: boolean; dim?: boolean }) => (
  <div
    className={clsx(
      "flex items-center justify-center shrink-0 size-[21.500px] rounded-[4px] shadow-[0_1px_0_rgba(0,0,0,0.3)]",
      checked ? "bg-[#5070ae]" : dim ? "bg-[#464646]" : "bg-[#545454]",
    )}
  >
    {checked && (
      <svg viewBox="0 0 16 16" className="size-[18px]" fill="none" stroke="#fff" strokeWidth="2.200"><path d="M2 8.4 L6 12.4 L14 3" /></svg>
    )}
  </div>
);

const label = "w-[238px] shrink-0 text-right";

const FieldGroup = ({ rows, className }: { rows: [string, string, boolean?][]; className: string }) => (
  <div className={clsx("flex gap-[16px]", className)}>
    <div className={clsx(label, "flex flex-col")}>
      {rows.map(([name], index) => (
        <div key={index} className="flex flex-1 items-center justify-end">{name}</div>
      ))}
    </div>
    <div className="flex flex-col gap-[1.500px] w-[337.500px] rounded-[6px] overflow-hidden shadow-[0_1px_0_rgba(0,0,0,0.3)]">
      {rows.map(([, value, on], index) => (
        <div key={index} className={clsx("flex flex-1 items-center justify-center pb-px", on ? "bg-[#5070ae]" : "bg-[#545454]")}>{value}</div>
      ))}
    </div>
  </div>
);

const Segments = ({ name, options }: { name: string; options: string[] }) => (
  <div className="flex items-center h-[31px] gap-[16px] mt-[6px]">
    <div className={label}>{name}</div>
    <div className="flex gap-[1.500px] w-[337.500px] h-full rounded-[6px] overflow-hidden">
      {options.map((option, index) => (
        <div
          key={option}
          className={clsx("flex flex-1 items-center justify-center", index === options.length - 1 ? "bg-[#5070ae] text-white" : "bg-[#545454]")}
        >
          {option}
        </div>
      ))}
    </div>
  </div>
);

const panel = "w-[606px] shrink-0 rounded-[6px] bg-[#3d3d3d]";

const Properties = () => (
  <div className="relative flex flex-col w-[681px] rounded-[8px] overflow-hidden bg-[#303030]">
    <div className="relative flex items-center h-[42px] shrink-0 pl-[12px] pr-[13px]">
      <EditorButton><PropertiesIcon /></EditorButton>
      <div className={clsx(widget, "ml-[180px] w-[196px] pl-[7px] gap-[10px] bg-[#1d1d1d]")}>
        <Search />
        <span className="text-[#686868]">Search</span>
      </div>
      <div className={clsx(widget, "ml-auto w-[33px] justify-center bg-[#282828]")}><Chevron /></div>
    </div>
    <div className="flex flex-1 min-h-0">
      <PropertyTabs />
      <div className="flex flex-col gap-[3.300px] pl-[13px] h-[942px] overflow-hidden">
        <div className="flex items-center h-[60px] shrink-0 pl-[4px] pr-[2px]">
          <SceneIcon />
          <span className="ml-[14px] mr-auto">Scene</span>
          <Pin className="text-[#a0a0a0]" />
        </div>
        <div className={clsx(panel, "h-[359px]")}>
          <PanelHeader title="Format" preset />
          <FieldGroup className="mt-[11.500px] h-[98px]" rows={[["Resolution X", "1920 px"], ["Y", "1080 px"], ["%", "100%", true]]} />
          <FieldGroup className="mt-[10.600px] h-[64px]" rows={[["Aspect X", "1.000"], ["Y", "1.000"]]} />
          <div className="flex items-center h-[33.600px] mt-[9.500px] pl-[254px] gap-[7px]"><Checkbox />Render Region</div>
          <div className="flex items-center h-[33.600px] pl-[254px] gap-[7px] text-[#828282]"><Checkbox dim />Crop to Render Region</div>
          <div className="flex items-center h-[31px] mt-[8.500px] gap-[16px]">
            <div className={label}>Frame Rate</div>
            <div className="flex items-center w-[337.500px] h-full pl-[12.500px] pr-[5px] rounded-[6px] bg-[#282828]">
              29.97 fps
              <Chevron className="ml-auto" />
            </div>
          </div>
        </div>
        <div className={clsx(panel, "h-[209.300px]")}>
          <PanelHeader title="Frame Range" />
          <FieldGroup className="mt-[11.500px] h-[98px]" rows={[["Frame Start", "1"], ["End", "250"], ["Step", "1"]]} />
          <div className="flex items-center h-[38px] mt-[16.500px] pl-[41px]">
            <svg viewBox="0 0 10 16" className="w-[10px] h-[16px]" fill="none" stroke="#b8b8b8" strokeWidth="1.800"><path d="M1 0.7 L9 8 L1 15.3" /></svg>
            <span className="ml-[9.500px]">Time Stretching</span>
          </div>
        </div>
        <div className={clsx(panel, "flex items-center h-[41.400px] pl-[18px] pr-[10px] pt-[2px]")}>
          <svg viewBox="0 0 10 16" className="w-[10px] h-[16px]" fill="none" stroke="#b8b8b8" strokeWidth="1.800"><path d="M1 0.7 L9 8 L1 15.3" /></svg>
          <div className="flex items-center gap-[7px] ml-[7px] mr-auto"><Checkbox />Stereoscopy</div>
          <DragDots />
        </div>
        <div className={clsx(panel, "h-[300px]")}>
          <PanelHeader title="Output" />
          <div className="flex gap-[1.500px] mt-[12px] ml-[14px] w-[577.500px] h-[31px] rounded-[6px] overflow-hidden">
            <div className="flex flex-1 items-center pl-[12px] bg-[#1d1d1d]">//export/</div>
            <div className="flex items-center justify-center w-[32px] bg-[#545454]"><FolderIcon /></div>
          </div>
          <div className="flex items-center h-[36.800px] mt-[7.700px] gap-[16px]">
            <div className={label}>Saving</div>
            <div className="flex items-center gap-[7px] text-white"><Checkbox checked />File Extensions</div>
          </div>
          <div className="flex items-center h-[36.800px] pl-[254px] gap-[7px]"><Checkbox />Cache Result</div>
          <div className="flex items-center h-[31px] mt-[7px] gap-[16px]">
            <div className={label}>File Format</div>
            <div className="flex items-center w-[337.500px] h-full pl-[6px] pr-[5px] gap-[10px] rounded-[6px] bg-[#282828]">
              <ImageIcon />
              PNG
              <Chevron className="ml-auto" />
            </div>
          </div>
          <Segments name="Color" options={["BW", "RGB", "RGBA"]} />
          <Segments name="Color Depth" options={["8", "16"]} />
        </div>
      </div>
    </div>
    <div className="absolute right-[4px] top-[58px] w-[5px] h-[702px] rounded-full bg-[#3d3d3d]" />
  </div>
);

/* ---------- sequencer ---------- */

const timecode = (frame: number) =>
  `00:${String(Math.floor(frame / 30)).padStart(2, "0")}+${String(frame % 30).padStart(2, "0")}`;

const Channel = ({ number }: { number: number }) => (
  <div className="flex items-center h-[129.900px] shrink-0 pl-[18px] text-white">
    <span className="w-[191px]">Channel {number}</span>
    <svg viewBox="0 0 16 16" className="size-[17.500px]">
      <rect width="16" height="16" rx="1.5" fill="#b4b4b4" />
      <path d="M3 8.2 L6.6 12 L13 3.5" fill="none" stroke="#181818" strokeWidth="2.400" />
    </svg>
    <svg viewBox="0 0 24 19" className="w-[24px] h-[19px] ml-[5px] mt-[-2px]" fill="none" stroke="#787878" strokeWidth="1.500">
      <path d="M1 7 V5.5 Q1 1 5.5 1 Q10 1 10 5.5 V9 M9 9 H23 V18 H9z M16 11.8 v3.4" />
    </svg>
  </div>
);

const Sequencer = () => (
  <div className="flex flex-col h-[1035px] mt-[5px]">
    <div className="relative flex items-center h-[42px] shrink-0 pl-[13px] rounded-t-[8px] bg-[#303030]">
      <EditorButton><Clapper /></EditorButton>
      <div className={clsx(widget, "ml-[8.600px] w-[255px] bg-[#282828] pl-[6px] pr-[5px] gap-[10px]")}>
        <SequencerIcon />
        Sequencer
        <Chevron className="ml-auto mt-[2px]" />
      </div>
      <div className="ml-[21.500px]"><Menu items={["View", "Select", "Marker", "Add", "Strip", "Image"]} /></div>
      <div className="absolute left-[1846px] flex gap-[9.600px]">
        <div className={clsx(widget, "w-[144.500px] bg-[#282828] pl-[12px] pr-[5px]")}>
          Shuffle
          <Chevron className="ml-auto mt-[2px]" />
        </div>
        <ToggleDrop icon={<Magnet />} />
      </div>
      <div className="ml-auto pr-[14.500px]"><ToggleDrop on icon={<OverlayIcon />} /></div>
    </div>
    <div className="flex flex-1 min-h-0 bg-[#181818]">
      <div className="relative w-[271px] shrink-0 overflow-hidden">
        <div className="flex flex-col -mt-[64px]">
          {[8, 7, 6, 5, 4, 3, 2, 1].map((number) => (
            <Channel key={number} number={number} />
          ))}
        </div>
        <RegionToggle className="left-0 top-[24px]" />
      </div>
      <div className="relative w-[3191px] shrink-0 overflow-hidden">
        <div className="flex items-center h-[39px] pt-[2px] pl-[12.600px] bg-[#111] text-[#9c9c9c]">
          {Array.from({ length: 31 }, (_, index) => (
            <div key={index} className="w-[102.030px] shrink-0 text-center">{timecode(index * 8)}</div>
          ))}
        </div>
        <div className="h-[26px]" />
        {[7, 6, 5, 4, 3, 2, 1].map((number) => (
          <div key={number} className={clsx("h-[129.970px]", number % 2 ? "bg-[#1d1d1d]" : "bg-[#181818]")} />
        ))}
        {/* frames before the start of the scene */}
        <div className="absolute left-0 top-[39px] bottom-0 w-[76px] bg-black/25" />
        {Array.from({ length: 9 }, (_, index) => (
          <div
            key={index}
            className={clsx("absolute top-[39px] bottom-0 w-px", index ? "bg-[#333]" : "bg-[#1f1f1f]")}
            style={{ left: 63.2 + index * 382.6 }}
          />
        ))}
        <div className="absolute left-[75px] top-[20px] bottom-0 w-[2.600px] bg-[#5474b1]" />
        <div className="absolute left-[24px] top-[5px] flex items-center justify-center w-[105px] h-[29px] rounded-[6px] border border-[#5577b8] bg-[#4b6aa8] text-white">00:00+01</div>
        <div className="absolute left-[14.700px] bottom-[3.500px] flex items-center justify-between w-[3085px] h-[13.800px] px-px rounded-full bg-[#545454]">
          <ScrollKnob />
          <ScrollKnob />
        </div>
        <div className="absolute left-[3172px] top-[55px] flex flex-col items-center justify-between w-[14.400px] h-[809px] py-px rounded-full bg-[#545454]">
          <ScrollKnob />
          <ScrollKnob />
        </div>
      </div>
      <div className="w-[452px] shrink-0 pl-[13px] pt-[3px] bg-[#303030]">
        <div className="w-[426px] h-[114.500px] rounded-[6px] bg-[#3d3d3d] text-white">
          <PanelHeader title="Active Tool" />
          <div className="flex items-center h-[53px] pl-[29.500px] gap-[15.500px] text-[#cfcfcf]">
            <TweakIcon />
            Tweak
          </div>
        </div>
      </div>
      <div className="flex-1 pt-[7px]">
        <div className="flex items-center justify-center w-[32px] h-[65.400px] rounded-r-[6px] border border-l-0 border-[#3d3d3d] bg-[#303030] text-white [writing-mode:vertical-rl]">Tool</div>
        <div className="flex items-center justify-center w-[32px] h-[77.300px] mt-[6.700px] rounded-r-[6px] border border-l-0 border-[#3d3d3d] bg-[#1d1d1d] text-[#cfcfcf] [writing-mode:vertical-rl]">Proxy</div>
      </div>
    </div>
  </div>
);

/* ---------- status bar ---------- */

const MouseIcon = ({ button }: { button: "left" | "middle" | "right" }) => (
  <svg viewBox="0 0 20 26" className="w-[20px] h-[26px]" fill="none" stroke="#8c8c8c" strokeWidth="1.600">
    {button === "middle" && <path d="M6 1 h8 a5 5 0 0 1 5 5 v14 a5 5 0 0 1 -5 5 h-8 a5 5 0 0 1 -5 -5 v-14 a5 5 0 0 1 5 -5z" />}
    {button === "left" && <path d="M1 15 V20 a5 5 0 0 0 5 5 h8 a5 5 0 0 0 5 -5 V6 a5 5 0 0 0 -5 -5 h-2" />}
    {button === "right" && <path d="M19 15 V20 a5 5 0 0 1 -5 5 h-8 a5 5 0 0 1 -5 -5 V6 a5 5 0 0 1 5 -5 h2" />}
    {button === "middle" && <rect x="7.5" y="4.5" width="5" height="9.5" rx="2.5" fill="#8c8c8c" stroke="none" />}
    {button === "left" && <path d="M0.5 13 V6 Q0.5 0.5 6 0.5 H9.5 V13z" fill="#8c8c8c" stroke="none" />}
    {button === "right" && <path d="M19.5 13 V6 Q19.5 0.5 14 0.5 H10.5 V13z" fill="#8c8c8c" stroke="none" />}
  </svg>
);

const StatusBar = () => (
  <div className="flex h-[36px] pt-[6px] pl-[18.500px] pr-[22.500px] bg-[#181818] text-[#8f8f8f]">
    <div className="flex items-center h-[26px] w-[369px] gap-[18.500px]"><MouseIcon button="left" />Sample Color</div>
    <div className="flex items-center h-[26px] w-[369px] gap-[18.500px]"><MouseIcon button="middle" />Pan View</div>
    <div className="flex items-center h-[26px] w-[369px] gap-[18.500px]"><MouseIcon button="right" />Sequencer Preview</div>
    <span className="flex items-center h-[26px] ml-auto tracking-[0.147px]">
      Scene Collection | Verts:0 | Faces:0 | Tris:0 | Duration: 00:08+10 (Frame 1/250) | Memory: 162.7 MiB | 4.1.0
    </span>
  </div>
);

export default function App() {
  return (
    <div className="w-[4096px] h-[2336px] overflow-hidden bg-white pl-[74px] pt-[49px] font-['Inter',sans-serif] text-[18.500px] leading-[24px] text-[#e6e6e6] tabular-nums [font-feature-settings:'cv08'] [text-shadow:0_1px_1px_rgba(0,0,0,0.5)]">
      <div className="rounded-[14px] shadow-[0_0_0_1px_rgba(0,0,0,0.75),0_24px_60px_rgba(0,0,0,0.62)] w-[3948px] h-[2190px]">
        <div className="relative w-full h-full overflow-hidden rounded-[14px] bg-[#161616]">
          <TitleBar />
          <TopBar />
          <div className="flex gap-[5px] h-[984px]">
            <FileBrowser />
            <div className="flex flex-col gap-[5px] w-[2469px]">
              <Preview />
              <Timeline />
            </div>
            <Properties />
          </div>
          <Sequencer />
          <div className="relative flex items-center h-[41px] mt-[5px] pl-[13px] rounded-[8px] bg-[#303030]">
            <PlaybackMenus />
            <div className="absolute left-[1818px] flex"><Transport /></div>
            <FrameFields />
          </div>
          <StatusBar />
          {/* light rim on the window edge */}
          <div className="absolute inset-0 rounded-[14px] border border-[#6a6a6a] border-x-[#444] border-b-[#555] pointer-events-none" />
        </div>
      </div>
    </div>
  );
}
